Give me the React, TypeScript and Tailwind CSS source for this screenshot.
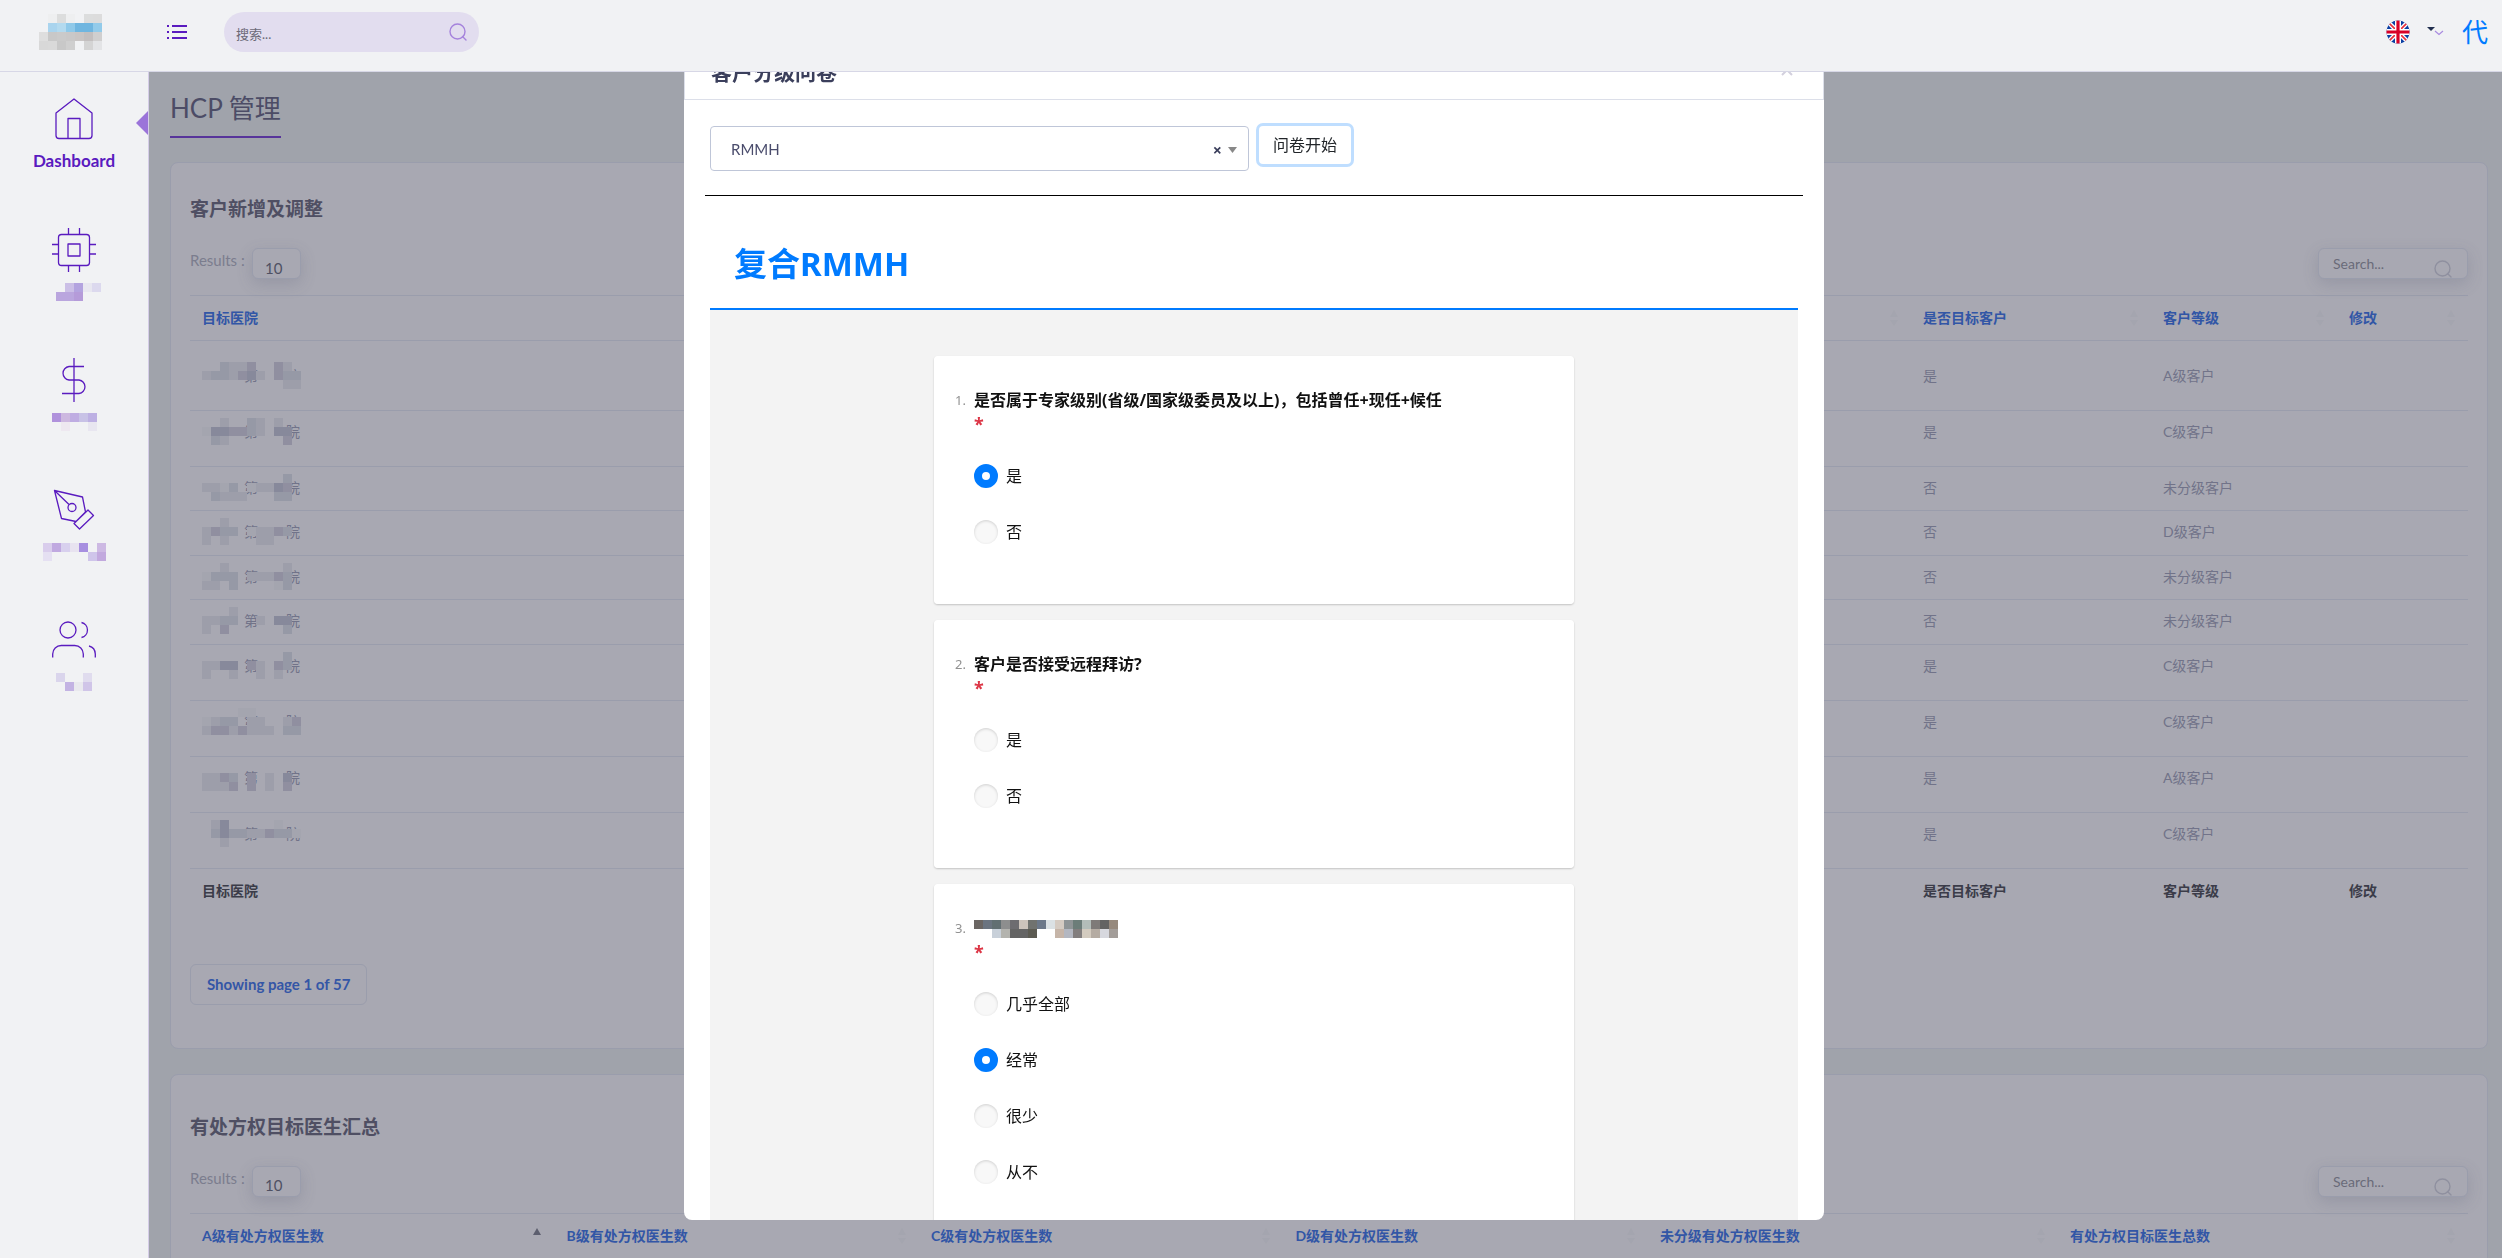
import { useState } from "react";
import type { ReactNode } from "react";

type Cells = (string | null)[][];

interface HospitalRow {
  mask: string[];
  isTarget: string;
  level: string;
  height: string;
}

interface Question {
  id: number;
  title: string | null;
  options: string[];
  answer: string | null;
}

const SHADES: Record<string, string> = {
  "1": "#a4a5af",
  "2": "#9d9eaa",
  "3": "#9699a6",
  "4": "#908fa0",
  "5": "#87899b",
};

const logoCells: Cells = [
  [null, "#eeeff0", "#dcdddd", "#eeeff0", null, "#dcdddd", "#dcdcdc"],
  [null, "#a9d4ee", "#b3daef", "#8fc9e9", "#70b6e0", "#70b6e0", "#93cbea"],
  ["#dedede", "#c8c8c8", "#cacaca", "#c9c8c8", "#c9c5c4", "#c3bfbf", "#d0cfcf"],
  ["#d8d8d8", "#d9d9d9", "#c8c8c8", "#cfcfcf", null, "#d4d4d4", "#e3e4e6"],
];

const questionCells: Cells = [
  ["#6b6663", "#6b7480", "#626f72", "#8d8e8e", "#6d6c70", "#ccc3bb", "#70726f", "#6c7889", "#dbe1e4", "#d5cbc2", "#8f9496", "#6c7d79", "#b3bdb9", "#7e7a78", "#636363", "#96897d"],
  [null, null, "#c8d0d9", "#b3b3ae", "#646464", "#646464", "#5c5b52", null, null, "#c6b5a8", "#b3b7c1", "#827e7e", "#d3cbbf", "#b5aca3", "#d7d8de", "#a39d99"],
];

const rows: HospitalRow[] = [
  { mask: ["..3224..42.", "2332452.433", ".........22"], isTarget: "是", level: "A级客户", height: "h-[70px] align-middle" },
  { mask: ["..2..32.2..", "1554432.55.", ".32......4."], isTarget: "是", level: "C级客户", height: "h-14 align-top" },
  { mask: [".........3.", "2213.12254.", ".3222...33."], isTarget: "否", level: "未分级客户", height: "h-11 align-top" },
  { mask: ["..2........", "2433.12243.", "2.2...22..."], isTarget: "否", level: "D级客户", height: "h-[45px] align-top" },
  { mask: ["..2......2.", "1333.22243.", "22.3....13."], isTarget: "否", level: "未分级客户", height: "h-11 align-top" },
  { mask: ["...2.......", "2233..2.55.", "2.4......3."], isTarget: "否", level: "未分级客户", height: "h-[45px] align-top" },
  { mask: [".........3.", "2255.42.43.", "2..2..2.2.."], isTarget: "是", level: "C级客户", height: "h-14 align-top" },
  { mask: ["....11.....", "1233.22..24", "24424222.33"], isTarget: "是", level: "C级客户", height: "h-14 align-top" },
  { mask: ["...........", "2243.4.2.5.", "2224.4.2.4."], isTarget: "是", level: "A级客户", height: "h-14 align-top" },
  { mask: [".25.....1..", ".3533224331", "..2........"], isTarget: "是", level: "C级客户", height: "h-14 align-top" },
];

const summaryColumns = [
  { label: "A级有处方权医生数", width: "w-[16%]" },
  { label: "B级有处方权医生数", width: "w-[16%]" },
  { label: "C级有处方权医生数", width: "w-[16%]" },
  { label: "D级有处方权医生数", width: "w-[16%]" },
  { label: "未分级有处方权医生数", width: "w-[18%]" },
  { label: "有处方权目标医生总数", width: "w-[18%]" },
];

const questions: Question[] = [
  {
    id: 1,
    title: "是否属于专家级别(省级/国家级委员及以上)，包括曾任+现任+候任",
    options: ["是", "否"],
    answer: "是",
  },
  { id: 2, title: "客户是否接受远程拜访?", options: ["是", "否"], answer: null },
  { id: 3, title: null, options: ["几乎全部", "经常", "很少", "从不"], answer: "经常" },
];

function Mosaic({ cells, className = "" }: { cells: Cells; className?: string }) {
  const width = Math.max(...cells.map((row) => row.length)) * 9;
  const height = cells.length * 9;
  return (
    <svg
      width={width}
      height={height}
      viewBox={`0 0 ${width} ${height}`}
      shapeRendering="crispEdges"
      className={className}
      aria-hidden="true"
    >
      {cells.map((row, y) =>
        row.map((fill, x) =>
          fill ? <rect key={`${x}-${y}`} x={x * 9} y={y * 9} width="9" height="9" fill={fill} /> : null
        )
      )}
    </svg>
  );
}

function SearchIcon({ className }: { className: string }) {
  return (
    <svg width="18" height="18" viewBox="0 0 18 18" fill="none" stroke="currentColor" strokeWidth="1.4" className={className}>
      <circle cx="8.5" cy="8.5" r="7.5" />
      <path d="M13.5 13.5 17 17" strokeLinecap="round" />
    </svg>
  );
}

function NavIcon({ children }: { children: ReactNode }) {
  return (
    <svg width="44" height="44" viewBox="0 0 44 44" fill="none" stroke="#5a1bbf" strokeWidth="1.3" strokeLinejoin="round" aria-hidden="true">
      {children}
    </svg>
  );
}

const navItems: { id: string; icon: ReactNode; cells: Cells }[] = [
  {
    id: "chip",
    icon: (
      <>
        <rect x="6.5" y="6.5" width="31" height="31" rx="3" />
        <rect x="16" y="16" width="12" height="12" />
        <path d="M16.5 0v6M27.5 0v6M16.5 38v6M27.5 38v6M0 16.5h6M0 26h6M38 16.5h6M38 26h6" />
      </>
    ),
    cells: [
      [null, null, "#cbbfe6", "#b3a3df", "#e8e7f0", "#dcd9ee"],
      [null, "#baa6de", "#baa6de", "#b59bd9", null, null],
    ],
  },
  {
    id: "dollar",
    icon: <path d="M22 0v44M32 8.5H17a6.8 6.8 0 0 0 0 13.5h10a6.8 6.8 0 0 1 0 13.5H10" />,
    cells: [
      ["#b092dc", "#cdb8e0", "#bfade2", "#c8c2e6", "#bdb0e3"],
      [null, "#eee8f0", null, null, "#e8e6f0"],
    ],
  },
  {
    id: "pen",
    icon: (
      <>
        <path d="M2.5 2.5 30.5 9l3 15L24 33.5l-14.5-3ZM2.5 2.5 17 16.5M36 22l5.5 5.5L27.5 41 22 35.5Z" />
        <circle cx="20" cy="19.5" r="4" />
      </>
    ),
    cells: [
      ["#d9cdec", "#c0a9e0", "#d8d0ee", "#e8e3f0", "#a78fe0", null, "#cdb9e3"],
      ["#e5e0f2", null, null, null, null, "#cfc5ea", "#c2a9de"],
    ],
  },
  {
    id: "users",
    icon: (
      <>
        <circle cx="16" cy="12" r="8" />
        <path d="M29.5 4.5a7.7 7.7 0 0 1 0 15M.7 39.5V36a8.5 8.5 0 0 1 8.5-8.5h13.6a8.5 8.5 0 0 1 8.5 8.5v3.5M37 28a8.5 8.5 0 0 1 6.3 8v3.5" />
      </>
    ),
    cells: [
      ["#dad5ec", null, null, "#e0dcee"],
      [null, "#c3b3e3", "#e9e9ee", "#d0c5e8"],
    ],
  },
];

function Flag() {
  return (
    <svg width="24" height="24" viewBox="0 0 24 24" aria-label="English">
      <clipPath id="flag-round">
        <circle cx="12" cy="12" r="11.5" />
      </clipPath>
      <g clipPath="url(#flag-round)">
        <path fill="#0b3fa3" d="M0 0h24v24H0z" />
        <path stroke="#fff" strokeWidth="4.4" d="M0 0l24 24M24 0 0 24" />
        <path stroke="#e8303c" strokeWidth="1.6" d="M0 0l24 24M24 0 0 24" />
        <path stroke="#fff" strokeWidth="6" d="M12 0v24M0 12h24" />
        <path stroke="#d80027" strokeWidth="3.2" d="M12 0v24M0 12h24" />
      </g>
    </svg>
  );
}

function Header() {
  return (
    <header className="relative z-30 flex h-[72px] shrink-0 items-start border-b border-[#d7d7e6] bg-[#f1f2f4] pl-[39px] pr-3.5">
      <Mosaic cells={logoCells} className="mt-3.5" />
      <button type="button" aria-label="Menu" className="ml-16 mt-6">
        <svg width="22" height="16" viewBox="0 0 22 16" fill="#5a1bbf" shapeRendering="crispEdges">
          <path d="M1 1h2v2H1zM1 7h2v2H1zM1 13h2v2H1zM6 1h15v2H6zM6 7h15v2H6zM6 13h15v2H6z" />
        </svg>
      </button>
      <div className="relative ml-9 mt-3 w-[255px]">
        <input
          type="search"
          aria-label="搜索"
          placeholder="搜索..."
          className="h-10 w-full rounded-[20px] bg-[#e2ddef] pl-3 pr-12 pt-1 text-[13px] outline-none placeholder:text-[#6c6a78]"
        />
        <SearchIcon className="absolute right-3 top-[11px] text-[#a583dc]" />
      </div>
      <div className="ml-auto mt-5 flex items-start">
        <button type="button" aria-label="Language" className="flex items-start">
          <Flag />
          <svg width="18" height="12" viewBox="0 0 18 12" fill="none" className="ml-4 mt-1.5">
            <path d="M1 1h8L5 5z" fill="#22304f" />
            <path d="M9 5l4 3.5L17 5" stroke="#a98be0" strokeWidth="1.2" />
          </svg>
        </button>
        <a href="#profile" className="ml-[18px] text-[26px] leading-6 text-[#007bff]">
          代
        </a>
      </div>
    </header>
  );
}

function Sidebar() {
  return (
    <nav className="relative z-20 w-[149px] shrink-0 border-r border-[#d5cde8] bg-[#f1f2f4]">
      <a href="#dashboard" className="flex h-[156px] flex-col items-center pt-[25px]">
        <NavIcon>
          <path d="M4 16 22 2l18 14v22.500a3 3 0 0 1-3 3H7a3 3 0 0 1-3-3ZM16 41.500V21.500h12v20" />
        </NavIcon>
        <span className="mt-2.5 text-[17px] leading-5 font-bold text-[#5a1bbf]">Dashboard</span>
      </a>
      <svg width="12" height="24" viewBox="0 0 12 24" fill="#9b74d9" className="absolute right-0 top-[39px]" aria-hidden="true">
        <path d="M12 0v24L0 12z" />
      </svg>
      {navItems.map((item) => (
        <a key={item.id} href={`#${item.id}`} aria-label={item.id} className="flex h-[130px] flex-col items-center">
          <NavIcon>{item.icon}</NavIcon>
          <Mosaic cells={item.cells} className="mt-[11px]" />
        </a>
      ))}
    </nav>
  );
}

function SortMark({ active = false }: { active?: boolean }) {
  return (
    <svg width="10" height="18" viewBox="0 0 10 18" aria-hidden="true">
      <path d="M1 8h8L5 1z" fill={active ? "#5c5e6e" : "#a4a5af"} />
      <path d="M1 11h8l-4 6z" fill={active ? "#a8a8b2" : "#a4a5af"} />
    </svg>
  );
}

function ColumnHead({ label, className, active }: { label: string; className: string; active?: boolean }) {
  return (
    <th scope="col" className={`px-3 font-bold text-[#3256a6] ${className}`}>
      <div className="flex items-center justify-between">
        {label}
        <SortMark active={active} />
      </div>
    </th>
  );
}

function TableTools({ id }: { id: string }) {
  return (
    <div className="flex items-start justify-between pb-4">
      <div className="flex items-start">
        <label htmlFor={`results-${id}`} className="w-[62px] pt-0.5 text-[15px] leading-5 text-[#7b7d8e]">
          Results :
        </label>
        <select
          id={`results-${id}`}
          className="block h-[31px] w-[49px] appearance-none rounded-md border border-[#9a9dac] bg-[#a8a8b2] pl-3 pt-2 text-[15px] leading-5 text-[#4f5163] shadow-[0_5px_16px_rgba(80,85,110,0.2)]"
        >
          <option>10</option>
        </select>
      </div>
      <div className="relative w-[150px]">
        <input
          type="search"
          aria-label="Search"
          placeholder="Search..."
          className="block h-[31px] w-full rounded-md border border-[#9a9dac] bg-[#a8a8b2] px-3.5 text-sm shadow-[0_5px_16px_rgba(80,85,110,0.2)] placeholder:text-[#6a6b79]"
        />
        <SearchIcon className="absolute right-4 top-3 text-[#8f909f]" />
      </div>
    </div>
  );
}

function Card({ children, className }: { children: ReactNode; className: string }) {
  return (
    <section className={`rounded-lg border border-[#9a9dac] bg-[#a8a8b2] px-[19px] ${className}`}>{children}</section>
  );
}

function HospitalTable() {
  return (
    <table className="w-full table-fixed border-collapse text-left text-sm leading-5">
      <thead>
        <tr className="h-[45px] border-y border-[#9a9dac]">
          <ColumnHead label="目标医院" className="" />
          <ColumnHead label="是否目标客户" className="w-60" />
          <ColumnHead label="客户等级" className="w-[186px]" />
          <ColumnHead label="修改" className="w-[131px]" />
        </tr>
      </thead>
      <tbody className="text-[#717389]">
        {rows.map((row, i) => (
          <tr key={i} className={`border-b border-[#9a9dac] ${row.height}`}>
            <td className="px-3 py-[11px]">
              <div className="relative h-5 whitespace-pre">
                {"\u3000\u3000\u3000第\u3000\u3000院"}
                <Mosaic
                  cells={row.mask.map((line) => line.split("").map((c) => SHADES[c] ?? null))}
                  className="absolute left-0 top-[-4px]"
                />
              </div>
            </td>
            <td className="px-3 py-[11px]">{row.isTarget}</td>
            <td className="px-3 py-[11px]">{row.level}</td>
            <td />
          </tr>
        ))}
      </tbody>
      <tfoot className="text-[#3b3c49]">
        <tr className="h-[45px]">
          <th scope="col" className="px-3">目标医院</th>
          <th scope="col" className="px-3">是否目标客户</th>
          <th scope="col" className="px-3">客户等级</th>
          <th scope="col" className="px-3">修改</th>
        </tr>
      </tfoot>
    </table>
  );
}

function SummaryTable() {
  return (
    <table className="w-full table-fixed border-collapse text-left text-sm leading-5">
      <thead>
        <tr className="h-[45px] border-y border-[#9a9dac]">
          {summaryColumns.map((col, i) => (
            <ColumnHead key={col.label} label={col.label} className={col.width} active={i === 0} />
          ))}
        </tr>
      </thead>
    </table>
  );
}

function QuestionCard({ question }: { question: Question }) {
  const [answer, setAnswer] = useState(question.answer);

  return (
    <fieldset className="w-full max-w-[640px] rounded bg-white pb-[60px] pl-[21px] pt-8 shadow-[0_1px_2px_rgba(0,0,0,0.2)]">
      <div className="flex leading-6">
        <span className="w-[19px] text-[13px] text-[#919191]">{question.id}.</span>
        <div className="text-base leading-6">
          {question.title ? (
            <h3 className="font-bold text-[#111]">{question.title}</h3>
          ) : (
            <Mosaic cells={questionCells} className="mb-0.5 mt-1" />
          )}
          <div className="text-lg leading-6 font-bold text-[#dc3545]">*</div>
        </div>
      </div>
      <div className="mt-7 flex flex-col gap-8 pl-[19px]">
        {question.options.map((option) => (
          <label key={option} className="flex h-6 items-center gap-2 text-base leading-6 text-[#111]">
            <input
              type="radio"
              name={`question-${question.id}`}
              checked={answer === option}
              onChange={() => setAnswer(option)}
              className="size-6 appearance-none rounded-full bg-[#f8f8f8] shadow-[inset_0_1px_3px_rgba(0,0,0,0.16)] checked:border-8 checked:border-[#007bff] checked:bg-white checked:shadow-none"
            />
            {option}
          </label>
        ))}
      </div>
    </fieldset>
  );
}

function SurveyModal() {
  return (
    <div className="fixed inset-0 z-10 flex justify-center pb-[38px] pl-1.5 pt-11">
      <div role="dialog" aria-label="客户分级问卷" className="flex w-full max-w-[1140px] flex-col overflow-hidden rounded-lg bg-white">
        <div className="flex h-14 shrink-0 items-start justify-between border border-[#dcdfe9] px-[26px] pt-[13px]">
          <h2 className="text-[21px] leading-7 font-bold text-[#3b3f5c]">客户分级问卷</h2>
          <button type="button" aria-label="Close" className="mr-1 mt-1.5">
            <svg width="12" height="12" viewBox="0 0 12 12" stroke="#d3d0de" strokeWidth="2">
              <path d="M1 1l10 10M11 1 1 11" />
            </svg>
          </button>
        </div>
        <div className="min-h-0 flex-1 overflow-hidden px-[26px] pt-[26px] font-['Noto_Sans','Noto_Sans_CJK_SC',sans-serif]">
          <div className="flex items-start gap-2.5">
            <div className="relative w-[539px]">
              <select
                aria-label="问卷"
                className="block h-[45px] w-full appearance-none rounded border border-[#bfc6d8] bg-white pl-5 pt-0.5 font-['Lato',sans-serif] text-[15px] text-[#4a4c6c]"
              >
                <option>RMMH</option>
              </select>
              <div className="absolute right-3 top-3.5 flex items-center gap-1.5">
                <button type="button" aria-label="Clear" className="text-base leading-5 font-bold text-[#3b3f5c]">
                  ×
                </button>
                <svg width="9" height="6" viewBox="0 0 9 6" fill="#888">
                  <path d="M0 0h9L4.500 6z" />
                </svg>
              </div>
            </div>
            <button
              type="button"
              className="h-[38px] rounded bg-white px-3.5 text-base text-[#212529] shadow-[0_0_0_3px_#bfdeff]"
            >
              问卷开始
            </button>
          </div>
          <div role="separator" className="-mx-[5px] mt-6 h-px bg-black" />
          <h1 className="border-b-2 border-[#007bff] pb-6 pl-6 pt-12 text-[33px] leading-10 font-bold text-[#007bff]">
            复合RMMH
          </h1>
          <form className="flex flex-col items-center gap-4 bg-[#f3f3f3] pt-[46px]">
            {questions.map((question) => (
              <QuestionCard key={question.id} question={question} />
            ))}
          </form>
        </div>
      </div>
    </div>
  );
}

export default function App() {
  return (
    <div className="flex h-screen flex-col overflow-hidden bg-[#a0a3ab] font-['Lato','Noto_Sans_CJK_SC',sans-serif]">
      <Header />
      <div className="flex min-h-0 flex-1">
        <Sidebar />
        <main className="min-w-0 flex-1 overflow-hidden pl-[21px] pr-3.5">
          <h1 className="mb-6 mt-5 inline-block border-b-2 border-[#57349a] pb-3 text-[26px] leading-8 text-[#4c4c66]">
            HCP 管理
          </h1>
          <Card className="pb-[43px] pt-[31px]">
            <h2 className="mb-6 text-[19px] leading-[30px] font-bold text-[#4f4f63]">客户新增及调整</h2>
            <TableTools id="hospital" />
            <HospitalTable />
            <button
              type="button"
              className="mt-[50px] h-[41px] rounded-md border border-[#9a9dac] px-4 text-[15px] leading-5 font-bold text-[#3456a6]"
            >
              Showing page 1 of 57
            </button>
          </Card>
          <Card className="mt-[25px] h-96 pt-[37px]">
            <h2 className="mb-6 text-[19px] leading-[30px] font-bold text-[#4f4f63]">有处方权目标医生汇总</h2>
            <TableTools id="summary" />
            <SummaryTable />
          </Card>
        </main>
      </div>
      <SurveyModal />
    </div>
  );
}
